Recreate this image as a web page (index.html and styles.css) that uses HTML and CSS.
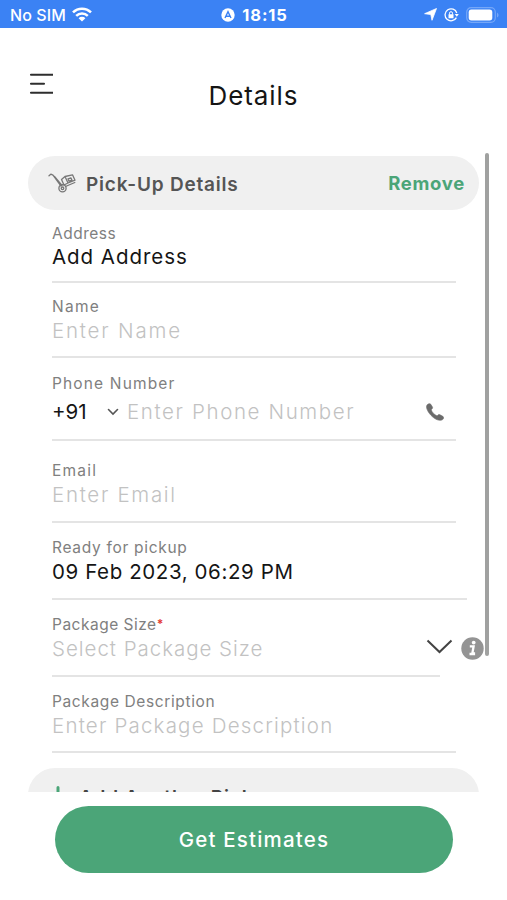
FILE: index.html
```html
<!DOCTYPE html>
<html lang="en">
<head>
<meta charset="utf-8">
<title>Details</title>
<link rel="stylesheet" href="styles.css">
</head>
<body>
<div class="screen">
  <div class="status">
    <div class="status-left">
      <span class="carrier">No SIM</span>
      <svg class="wifi" width="20" height="15" viewBox="0 0 20 15"><g fill="none" stroke="#fff" stroke-width="2.5"><path d="M1 5.4a12.7 12.7 0 0 1 18 0"/><path d="M4.2 8.8a8.2 8.2 0 0 1 11.6 0"/></g><path fill="#fff" d="M6.6 11.2a4.8 4.8 0 0 1 6.8 0L10 14.6z"/></svg>
    </div>
    <div class="status-mid">
      <svg width="14" height="14" viewBox="0 0 14 14"><circle cx="7" cy="7" r="6.7" fill="#fff"/><path d="M4 10 7 3.6 10 10M5.2 8.2h3.6" fill="none" stroke="#3b82f4" stroke-width="1.4"/></svg>
      <span class="clock">18:15</span>
    </div>
    <div class="status-right">
      <svg width="13" height="13" viewBox="0 0 13 13"><path fill="#fff" stroke="#fff" stroke-width=".8" stroke-linejoin="round" d="M12.500.5 8 12.300 6.800 6.500.6 5.700z"/></svg>
      <svg width="15" height="14" viewBox="0 0 15 14"><path d="M12.8 5A6 6 0 1 0 12.4 9.6" fill="none" stroke="#fff" stroke-width="1.3"/><path fill="#fff" d="M10.7 6h4.1l-2 2.7zM4.5 6.3h5v3.9h-5z"/><path d="M5.5 6.5V5.2a1.5 1.5 0 0 1 3 0v1.3" fill="none" stroke="#fff"/></svg>
      <svg class="battery" width="33" height="16" viewBox="0 0 33 16"><rect x=".7" y=".7" width="28.6" height="14.6" rx="4.5" fill="none" stroke="#75a7f8" stroke-width="1.2"/><rect x="2.7" y="2.5" width="23.6" height="11" rx="2.7" fill="#fff"/><path d="M31 5.5q1.6 1 1.6 2.5T31 10.500z" fill="#75a7f8"/></svg>
    </div>
  </div>

  <header class="header">
    <svg class="menu" width="24" height="22" viewBox="0 0 24 22"><path d="M2 1.800h21.500M2 10.800h13M2 19.800h21.500" stroke="#2e2e2e" stroke-width="2.1" stroke-linecap="round"/></svg>
    <h1 class="title">Details</h1>
  </header>

  <main class="scroller">
    <section class="card-head">
      <svg class="truck" width="28" height="20" viewBox="0 0 28 20"><g fill="none" stroke="#777" stroke-width="1.3" stroke-linejoin="round" stroke-linecap="round"><path d="M1 2.800 2.800 1.200 5 2.200 13 13M6.500 3.500 14 12.500"/><circle cx="14.500" cy="15.300" r="3.600"/><circle cx="14.500" cy="15.300" r="1.300"/><path d="m13.500 6.500 3.500-3 3 6.500-4 2zM17 3.500l7.500-1.700 2.500 5.400-7 2.800M17.500 13.500l9.300-4M20 5.800l3-.8 1 2.200-3 1z"/></g></svg>
      <h2 class="card-title">Pick-Up Details</h2>
      <span class="remove">Remove</span>
    </section>

    <div class="fields">
      <div class="field address"><span class="label">Address</span><span class="value">Add Address</span></div>
      <div class="field name"><span class="label">Name</span><span class="value hint">Enter Name</span></div>
      <div class="field phone">
        <span class="label">Phone Number</span>
        <div class="line">
          <span class="value code">+91</span>
          <svg class="caret" width="12" height="8" viewBox="0 0 12 8"><path d="m1.500 1.500 4.500 4.500 4.500-4.500" fill="none" stroke="#555" stroke-width="1.600" stroke-linecap="round"/></svg>
          <span class="value hint number">Enter Phone Number</span>
          <svg class="handset" width="18" height="18" viewBox="0 0 18 18"><path fill="#6b6b6b" stroke="#6b6b6b" stroke-width=".6" d="M1.200 1.800C2.300.5 4.100.2 4.800 1.300l1.600 2.600c.5.900.1 1.700-1.200 2.800.9 2.700 3.200 5 5.900 6.200 1.200-1.300 2-1.600 2.900-1.100l2.800 1.500c1.200.8 1 2.300-.2 3.300-2 1.700-6.400.5-10.100-2.800C2.200 10-.9 4.300 1.200 1.800z"/></svg>
        </div>
      </div>
      <div class="field email"><span class="label">Email</span><span class="value hint">Enter Email</span></div>
      <div class="field ready"><span class="label">Ready for pickup</span><span class="value">09 Feb 2023, 06:29 PM</span></div>
      <div class="size-row">
        <div class="field size"><span class="label">Package Size<span class="star">*</span></span><span class="value hint">Select Package Size</span></div>
        <svg class="chevron" width="27" height="15" viewBox="0 0 27 15"><path d="m1.500 1.500 12 11.500 12-11.500" fill="none" stroke="#444" stroke-width="2"/></svg>
        <svg class="info" width="23" height="23" viewBox="0 0 23 23"><circle cx="11.500" cy="11.500" r="11.200" fill="#949494"/><circle cx="12.700" cy="5.600" r="1.900" fill="#fff"/><path d="M8.800 9.400h3.800l-1.300 7.100h2.800M8.500 17h5.600" fill="none" stroke="#fff" stroke-width="2.300"/></svg>
      </div>
      <div class="field desc"><span class="label">Package Description</span><span class="value hint">Enter Package Description</span></div>
    </div>

    <section class="add-card">
      <svg width="18" height="18" viewBox="0 0 18 18"><path d="M9 1.500v15M1.500 9h15" stroke="#4ba578" stroke-width="3" stroke-linecap="round"/></svg>
      <span class="add-text">Add Another Pickup</span>
    </section>
    <div class="scrollbar"></div>
  </main>

  <footer class="footer"><button class="cta">Get Estimates</button></footer>
</div>
</body>
</html>
```

FILE: styles.css
```css
* { box-sizing: border-box; }
body { margin: 0; background: #fff; font-family: Inter, "Liberation Sans", sans-serif; }
.screen { width: 507px; height: 900px; display: flex; flex-direction: column; overflow: hidden; }
svg { display: block; flex: none; }
span, h1, h2 { white-space: nowrap; }

.status { height: 28px; background: #3b82f4; color: #fff; display: grid; grid-template-columns: 1fr auto 1fr; align-items: center; padding: 1px 8px 0 10px; }
.status-left, .status-mid, .status-right { display: flex; align-items: center; }
.status-left { gap: 6px; }
.status-mid { gap: 7px; }
.status-right { justify-content: flex-end; gap: 7px; }
.carrier { font-size: 16px; font-weight: 500; letter-spacing: 0.1px; }
.clock { font-size: 16.500px; font-weight: 700; letter-spacing: 0.9px; }

.header { height: 125px; display: grid; grid-template-columns: 1fr auto 1fr; align-items: start; }
.menu { margin: 45px 0 0 29px; }
.title { margin: 51px 0 0; font-size: 26px; line-height: 34px; font-weight: 400; color: #151515; letter-spacing: 0.9px; }

.scroller { position: relative; height: 639px; overflow: hidden; padding: 3px 28px 0; }
.card-head { height: 54px; border-radius: 27px; background: #f0f0f0; display: flex; align-items: center; padding: 0 14px 0 20px; }
.card-title { margin: 2px 0 0 10px; flex: 1; font-size: 19px; font-weight: 600; color: #555; letter-spacing: 0.8px; }
.remove { font-size: 18.500px; font-weight: 700; color: #4ba578; letter-spacing: 0.7px; }

.fields { padding-left: 24px; }
.field { width: 404px; border-bottom: 2px solid #e4e4e4; display: flex; flex-direction: column; justify-content: flex-end; padding-bottom: 12px; }
.label { font-size: 15.500px; line-height: 20px; color: #808080; letter-spacing: 0.5px; margin-bottom: 1px; }
.value { font-size: 20.500px; line-height: 26px; color: #151515; letter-spacing: 0.6px; }
.hint { color: #c2c2c2; font-weight: 300; }
.address { height: 73px; padding-bottom: 11px; }
.address .label { margin-bottom: 0; }
.address .value { letter-spacing: 0.950px; }
.name { height: 75px; }
.name .label { letter-spacing: 1.300px; }
.name .value { letter-spacing: 1.800px; }
.phone { height: 83px; padding-bottom: 14px; }
.phone .label { margin-bottom: 5px; letter-spacing: 1.150px; }
.email { height: 82px; padding-bottom: 13px; }
.email .label { letter-spacing: 1.200px; }
.email .value { letter-spacing: 1.700px; }
.ready { width: 415px; height: 77px; padding-bottom: 13px; }
.ready .label { letter-spacing: 0.700px; }
.size { width: 388px; height: 77px; padding-bottom: 13px; }
.size .value { letter-spacing: 0.970px; }
.desc { height: 76px; }
.desc .label { letter-spacing: 0.620px; }
.desc .value { letter-spacing: 1.200px; }
.line { display: flex; align-items: center; }
.phone .code { width: 55px; letter-spacing: 0; }
.phone .number { margin-left: 8px; flex: 1; letter-spacing: 1.620px; }
.handset { margin-right: 12px; }
.size-row { display: flex; height: 77px; width: 432px; }
.chevron { margin: 39px 0 0 -14px; }
.info { margin: 37px 0 0 8px; }
.star { color: #e33b32; font-size: 12px; font-weight: 700; vertical-align: 2px; line-height: 1; }

.add-card { margin-top: 15px; height: 54px; border-radius: 27px; background: #f0f0f0; display: flex; align-items: center; padding-left: 21px; gap: 12px; }
.add-text { margin-top: 5px; font-size: 19px; font-weight: 600; color: #444; letter-spacing: 0.9px; }
.scrollbar { position: absolute; top: 0; left: 485px; width: 4px; height: 503px; border-radius: 2px; background: #a0a1a0; }

.footer { padding: 14px 54px 0 55px; }
.cta { display: block; width: 398px; height: 67px; border: 0; border-radius: 34px; background: #4ba578; color: #fff; font: 500 20.500px Inter, "Liberation Sans", sans-serif; letter-spacing: 1.200px; }
```
